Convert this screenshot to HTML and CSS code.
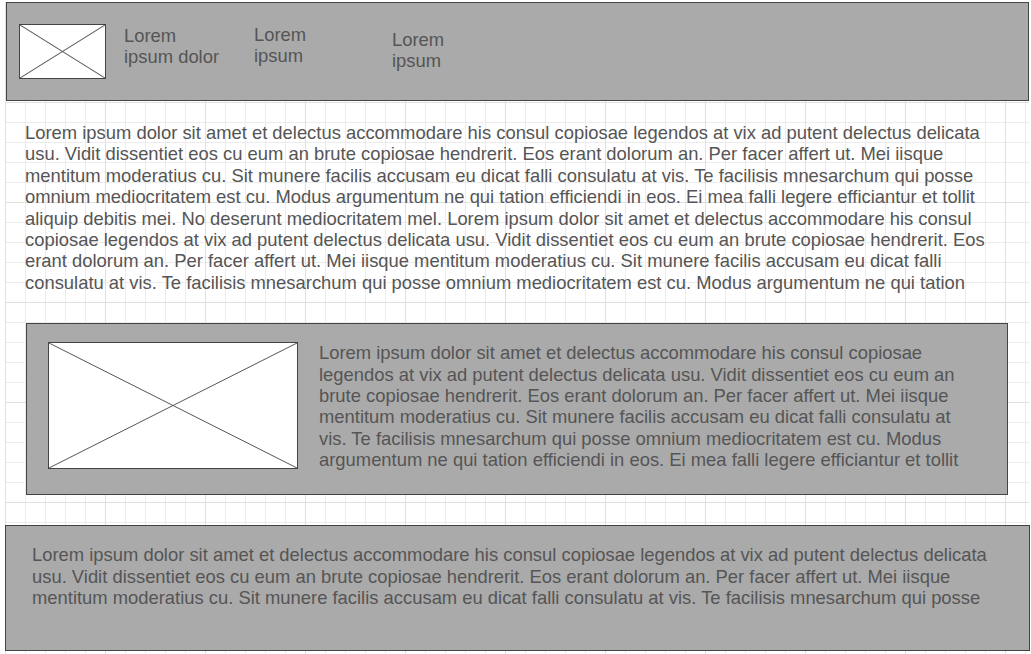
FILE: index.html
```html
<!DOCTYPE html>
<html lang="en">
<head>
  <meta charset="UTF-8">
  <meta name="viewport" content="width=device-width, initial-scale=1.0">
  <title>Wireframe</title>
  <link rel="stylesheet" href="styles.css">
</head>
<body>
  <div class="canvas">
    <header class="topbar">
      <div class="placeholder logo">
        <svg viewBox="0 0 100 100" preserveAspectRatio="none">
          <line x1="0" y1="0" x2="100" y2="100" vector-effect="non-scaling-stroke"/>
          <line x1="100" y1="0" x2="0" y2="100" vector-effect="non-scaling-stroke"/>
        </svg>
      </div>
      <div class="nav-item nav-first">Lorem<br>ipsum dolor</div>
      <div class="nav-item nav-second">Lorem<br>ipsum</div>
      <div class="nav-item nav-third">Lorem<br>ipsum</div>
    </header>

    <p class="intro">Lorem ipsum dolor sit amet et delectus accommodare his consul copiosae legendos at vix ad putent delectus delicata usu. Vidit dissentiet eos cu eum an brute copiosae hendrerit. Eos erant dolorum an. Per facer affert ut. Mei iisque mentitum moderatius cu. Sit munere facilis accusam eu dicat falli consulatu at vis. Te facilisis mnesarchum qui posse omnium mediocritatem est cu. Modus argumentum ne qui tation efficiendi in eos. Ei mea falli legere efficiantur et tollit aliquip debitis mei. No deserunt mediocritatem mel. Lorem ipsum dolor sit amet et delectus accommodare his consul copiosae legendos at vix ad putent delectus delicata usu. Vidit dissentiet eos cu eum an brute copiosae hendrerit. Eos erant dolorum an. Per facer affert ut. Mei iisque mentitum moderatius cu. Sit munere facilis accusam eu dicat falli consulatu at vis. Te facilisis mnesarchum qui posse omnium mediocritatem est cu. Modus argumentum ne qui tation</p>

    <section class="feature">
      <div class="placeholder feature-image">
        <svg viewBox="0 0 100 100" preserveAspectRatio="none">
          <line x1="0" y1="0" x2="100" y2="100" vector-effect="non-scaling-stroke"/>
          <line x1="100" y1="0" x2="0" y2="100" vector-effect="non-scaling-stroke"/>
        </svg>
      </div>
      <p class="feature-text">Lorem ipsum dolor sit amet et delectus accommodare his consul copiosae legendos at vix ad putent delectus delicata usu. Vidit dissentiet eos cu eum an brute copiosae hendrerit. Eos erant dolorum an. Per facer affert ut. Mei iisque mentitum moderatius cu. Sit munere facilis accusam eu dicat falli consulatu at vis. Te facilisis mnesarchum qui posse omnium mediocritatem est cu. Modus argumentum ne qui tation efficiendi in eos. Ei mea falli legere efficiantur et tollit</p>
    </section>

    <footer class="footer">
      <p class="footer-text">Lorem ipsum dolor sit amet et delectus accommodare his consul copiosae legendos at vix ad putent delectus delicata usu. Vidit dissentiet eos cu eum an brute copiosae hendrerit. Eos erant dolorum an. Per facer affert ut. Mei iisque mentitum moderatius cu. Sit munere facilis accusam eu dicat falli consulatu at vis. Te facilisis mnesarchum qui posse</p>
    </footer>
  </div>
</body>
</html>
```

FILE: styles.css
```css
/* Page + grid paper */
body {
  margin: 0;
  background: #fff;
  font-family: 'Liberation Sans', Arial, sans-serif;
  font-size: 18.4px;
  line-height: 21.4px;
  color: #555;
  overflow: hidden;
}

.canvas {
  margin: 2px 0 0 5px;
  width: 1024px;
  height: 652px;
  background-color: #fff;
  background-image:
    linear-gradient(to right, #e0e0e0 1px, transparent 1px),
    linear-gradient(to bottom, #e0e0e0 1px, transparent 1px),
    linear-gradient(to right, #ececec 1px, transparent 1px),
    linear-gradient(to bottom, #ececec 1px, transparent 1px);
  background-size: 100px 100px, 100px 100px, 20px 20px, 20px 20px;
}

p {
  margin: 0;
}

/* Image placeholders */
.placeholder {
  box-sizing: border-box;
  flex-shrink: 0;
  background: #fff;
  border: 1px solid #444;
}

.placeholder svg {
  display: block;
  width: 100%;
  height: 100%;
}

.placeholder line {
  stroke: #555;
  stroke-width: 1;
}

/* Top bar */
.topbar {
  box-sizing: border-box;
  display: flex;
  align-items: flex-start;
  width: 1023px;
  height: 99px;
  margin: 1px 0 0 1px;
  padding: 20px 0 0 12px;
  background: #aaa;
  border: 1px solid #444;
}

.logo {
  width: 87px;
  height: 55px;
  margin-top: 1px;
}

.nav-first {
  width: 130px;
  margin: 2px 0 0 18px;
}

.nav-second {
  width: 138px;
  margin-top: 1px;
}

.nav-third {
  margin-top: 6px;
}

/* Intro text */
.intro {
  width: 968px;
  margin: 21px 0 0 20px;
}

/* Feature box */
.feature {
  box-sizing: border-box;
  display: flex;
  align-items: flex-start;
  width: 982px;
  height: 172px;
  margin: 30px 0 0 21px;
  padding: 18px 0 0 21px;
  background: #aaa;
  border: 1px solid #444;
}

.feature-image {
  width: 250px;
  height: 127px;
}

.feature-text {
  width: 655px;
  height: 128px;
  margin-left: 21px;
  overflow: hidden;
}

/* Footer box */
.footer {
  box-sizing: border-box;
  width: 1025px;
  height: 126px;
  margin-top: 30px;
  padding: 18px 0 0 26px;
  background: #aaa;
  border: 1px solid #444;
}

.footer-text {
  width: 968px;
}
```
